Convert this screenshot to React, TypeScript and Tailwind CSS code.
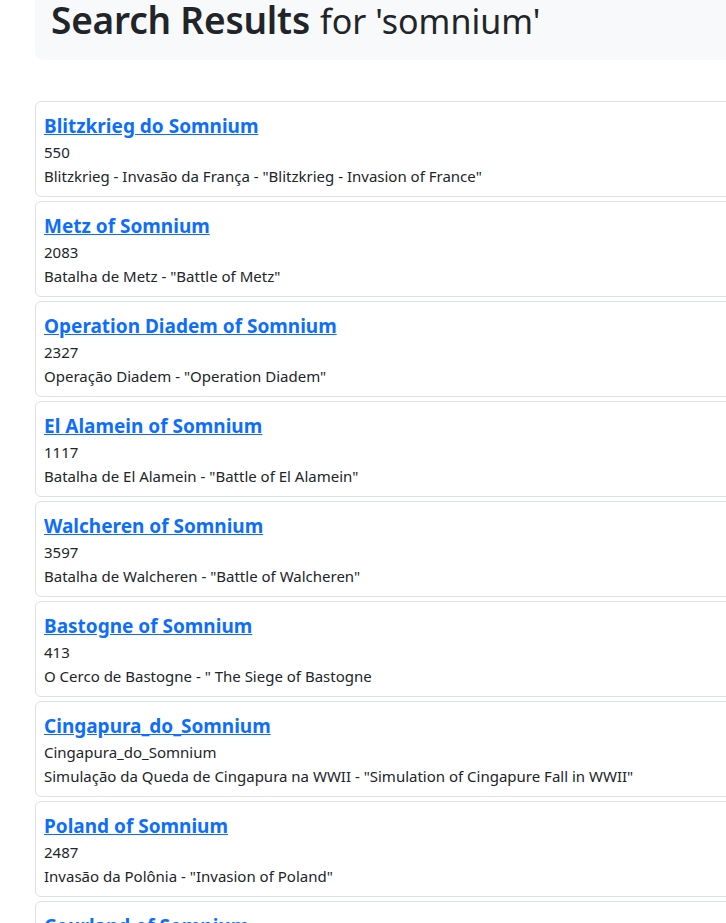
import React from "react";

const results = [
  { title: "Blitzkrieg do Somnium", id: "550", desc: 'Blitzkrieg - Invasão da França - "Blitzkrieg - Invasion of France"' },
  { title: "Metz of Somnium", id: "2083", desc: 'Batalha de Metz - "Battle of Metz"' },
  { title: "Operation Diadem of Somnium", id: "2327", desc: 'Operação Diadem - "Operation Diadem"' },
  { title: "El Alamein of Somnium", id: "1117", desc: 'Batalha de El Alamein - "Battle of El Alamein"' },
  { title: "Walcheren of Somnium", id: "3597", desc: 'Batalha de Walcheren - "Battle of Walcheren"' },
  { title: "Bastogne of Somnium", id: "413", desc: 'O Cerco de Bastogne - " The Siege of Bastogne' },
  { title: "Cingapura_do_Somnium", id: "Cingapura_do_Somnium", desc: 'Simulação da Queda de Cingapura na WWII - "Simulation of Cingapure Fall in WWII"' },
  { title: "Poland of Somnium", id: "2487", desc: 'Invasão da Polônia - "Invasion of Poland"' },
  { title: "Courland of Somnium", id: "1830", desc: 'Bolsão da Curlândia - "Courland Pocket"' },
];

export default function App() {
  return (
    <div
      className="w-full h-[923px] overflow-hidden bg-white text-[#212529]"
      style={{ fontFamily: '"Segoe UI", "Noto Sans", sans-serif' }}
    >
      <div className="pl-[35px] -mr-5">
        {/* Header */}
        <div className="-mt-[5px] h-[65px] bg-[#f8f9fa] rounded-lg px-4 pt-[1px]">
          <h1 className="flex items-baseline gap-[10px] leading-[48px]">
            <span className="text-[37px] font-semibold tracking-[-0.2px]">Search Results</span>
            <small className="text-[34px] font-normal">for 'somnium'</small>
          </h1>
        </div>

        {/* Results */}
        <div className="mt-[41px] flex flex-col gap-1">
          {results.map((r) => (
            <div
              key={r.title}
              className="border border-[#dee2e6] rounded-md pt-[12px] pb-2 px-2"
            >
              <h5 className="text-[19px] leading-6 font-bold mb-[2px]">
                <a href="#" className="text-[#0d6efd] underline">
                  {r.title}
                </a>
              </h5>
              <p className="text-[15px] leading-6">{r.id}</p>
              <p className="text-[15px] leading-6">{r.desc}</p>
            </div>
          ))}
        </div>
      </div>
    </div>
  );
}
